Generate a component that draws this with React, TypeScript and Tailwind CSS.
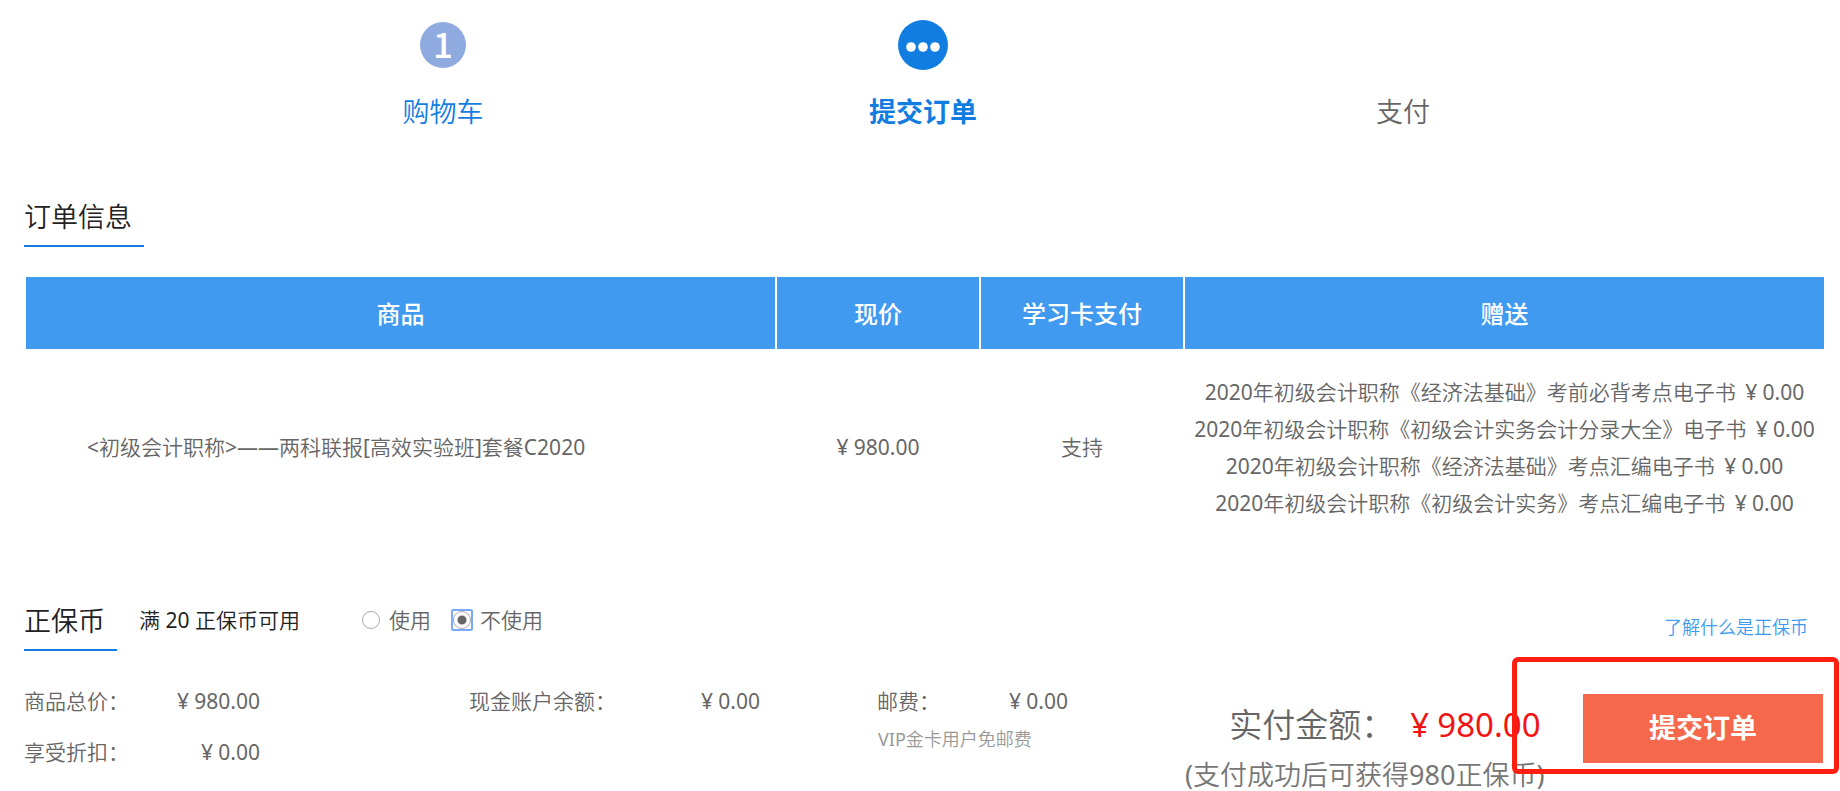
import { useState } from "react";

const steps = [
  { title: "购物车", state: "done" },
  { title: "提交订单", state: "current" },
  { title: "支付", state: "todo" },
];

const gifts = [
  { name: "2020年初级会计职称《经济法基础》考前必背考点电子书", price: "0.00" },
  { name: "2020年初级会计职称《初级会计实务会计分录大全》电子书", price: "0.00" },
  { name: "2020年初级会计职称《经济法基础》考点汇编电子书", price: "0.00" },
  { name: "2020年初级会计职称《初级会计实务》考点汇编电子书", price: "0.00" },
];

function Price({ value }: { value: string }) {
  return (
    <span className="whitespace-nowrap">
      <span className="mr-[0.25em]">¥</span>
      {value}
    </span>
  );
}

function StepIcon({ state }: { state: string }) {
  if (state === "done") {
    return (
      <span className="w-[46px] h-[46px] rounded-full bg-[#8eaadf] text-white font-['Noto_Sans_CJK_SC',sans-serif] text-[35px] leading-[42px] font-medium text-center">
        1
      </span>
    );
  }
  if (state === "current") {
    return (
      <svg viewBox="0 0 50 50" className="w-[50px] h-[50px]" aria-hidden="true">
        <circle cx="25" cy="25" r="25" fill="#127de1" />
        <circle cx="13" cy="27" r="4.8" fill="#fff" />
        <circle cx="25" cy="27" r="4.8" fill="#fff" />
        <circle cx="37" cy="27" r="4.8" fill="#fff" />
      </svg>
    );
  }
  return null;
}

function Steps() {
  return (
    <div className="pr-1 font-['Noto_Sans_CJK_SC',sans-serif]">
      <ol className="grid grid-cols-3 max-w-[1440px] mx-auto">
        {steps.map((step) => (
          <li key={step.title} className="flex flex-col items-center">
            <div className="h-[50px] flex items-center">
              <StepIcon state={step.state} />
            </div>
            <span
              className={
                step.state === "current"
                  ? "mt-[21px] text-[27px] leading-10 font-bold text-[#127de1]"
                  : step.state === "done"
                    ? "mt-[21px] text-[27px] leading-10 font-[350] text-[#127de1]"
                    : "mt-[21px] text-[27px] leading-10 font-[350] text-[#666]"
              }
            >
              {step.title}
            </span>
          </li>
        ))}
      </ol>
    </div>
  );
}

function SectionTitle({ children }: { children: string }) {
  return (
    <h2 className="inline-block pr-3 pb-[9px] border-b-2 border-[#127de1] font-['Noto_Sans_CJK_SC',sans-serif] text-[27px] leading-10 font-[350] text-[#222]">
      {children}
    </h2>
  );
}

function OrderTable() {
  return (
    <table className="w-full table-fixed border-separate border-spacing-[2px] text-center">
      <colgroup>
        <col className="w-[41.8%]" />
        <col className="w-[202px]" />
        <col className="w-[202px]" />
        <col />
      </colgroup>
      <thead>
        <tr className="h-[72px] font-['Noto_Sans_CJK_SC',sans-serif] text-2xl text-white">
          <th className="bg-[#409aef] font-medium">商品</th>
          <th className="bg-[#409aef] font-medium">现价</th>
          <th className="bg-[#409aef] font-medium">学习卡支付</th>
          <th className="bg-[#409aef] font-medium">赠送</th>
        </tr>
      </thead>
      <tbody>
        <tr className="h-[193px]">
          <td className="pl-[61px] pb-[2px] text-left">&lt;初级会计职称&gt;——两科联报[高效实验班]套餐C2020</td>
          <td className="pb-[2px]">
            <Price value="980.00" />
          </td>
          <td className="pb-[2px]">支持</td>
          <td className="leading-[37px] whitespace-nowrap">
            {gifts.map((gift) => (
              <p key={gift.name}>
                <span className="mr-1">{gift.name}</span> <Price value={gift.price} />
              </p>
            ))}
          </td>
        </tr>
      </tbody>
    </table>
  );
}

function CoinRadio({ id, label, checked, onChange }: { id: string; label: string; checked: boolean; onChange: () => void }) {
  return (
    <div className="flex items-center gap-[7px]">
      <span className={checked ? "flex rounded-xs border-2 border-[#78aaff]" : "flex border-2 border-transparent"}>
        <input
          type="radio"
          id={id}
          name="coin"
          checked={checked}
          onChange={onChange}
          className="appearance-none w-[18px] h-[18px] rounded-full border border-[#aaa] bg-white outline-none checked:bg-[radial-gradient(circle,#666_0_4px,transparent_5px)]"
        />
      </span>
      <label htmlFor={id}>{label}</label>
    </div>
  );
}

export default function App() {
  const [useCoin, setUseCoin] = useState(false);

  return (
    <main className="pt-5 pl-6 pr-[14px] bg-white font-['Noto_Sans','Noto_Sans_CJK_SC_DemiLight','Noto_Sans_CJK_SC',sans-serif] text-[21px] leading-8 text-[#666]">
      <Steps />

      <section className="mt-[65px]">
        <SectionTitle>订单信息</SectionTitle>
        <div className="mt-7">
          <OrderTable />
        </div>
      </section>

      {/* 正保币 */}
      <section className="mt-[54px] flex items-start">
        <SectionTitle>正保币</SectionTitle>
        <p className="ml-[22px] mt-1 text-[#222]">满 20 正保币可用</p>
        <div className="ml-[60px] mt-1 flex gap-5">
          <CoinRadio id="coin-use" label="使用" checked={useCoin} onChange={() => setUseCoin(true)} />
          <CoinRadio id="coin-none" label="不使用" checked={!useCoin} onChange={() => setUseCoin(false)} />
        </div>
        <a href="#coin" className="ml-auto mr-[18px] mt-[11px] text-lg leading-8 text-[#409aef]">
          了解什么是正保币
        </a>
      </section>

      {/* 结算 */}
      <section className="grid grid-cols-[445fr_408fr_308fr_641fr]">
        <dl className="pt-[34px] w-[236px]">
          <div className="flex justify-between">
            <dt>商品总价：</dt>
            <dd>
              <Price value="980.00" />
            </dd>
          </div>
          <div className="mt-[19px] flex justify-between">
            <dt>享受折扣：</dt>
            <dd>
              <Price value="0.00" />
            </dd>
          </div>
        </dl>
        <dl className="pt-[34px] w-[291px]">
          <div className="flex justify-between">
            <dt>现金账户余额：</dt>
            <dd>
              <Price value="0.00" />
            </dd>
          </div>
        </dl>
        <div className="pt-[34px] w-[191px]">
          <dl className="flex justify-between">
            <dt>邮费：</dt>
            <dd>
              <Price value="0.00" />
            </dd>
          </dl>
          <p className="mt-[6px] pl-px text-lg leading-8 text-[#999]">VIP金卡用户免邮费</p>
        </div>
        <div className="flex justify-between items-start pr-[3px]">
          <div className="pt-[50px] whitespace-nowrap">
            <p className="flex justify-end pr-1 text-[33px] leading-[48px]">
              <span>实付金额：</span>
              <span className="ml-4 text-[#f01414]">
                <Price value="980.00" />
              </span>
            </p>
            <p className="text-[27px] leading-[52px] text-[#777]">(支付成功后可获得980正保币)</p>
          </div>
          <div className="relative mt-[43px]">
            <button
              type="button"
              className="w-60 h-[69px] pb-[3px] bg-[#f5684b] font-['Noto_Sans_CJK_SC',sans-serif] text-[27px] font-bold text-white"
            >
              提交订单
            </button>
            <span className="absolute -top-[37px] -left-[71px] -right-4 -bottom-[11px] rounded-md border-5 border-[#ff1e10] pointer-events-none" />
          </div>
        </div>
      </section>
    </main>
  );
}
